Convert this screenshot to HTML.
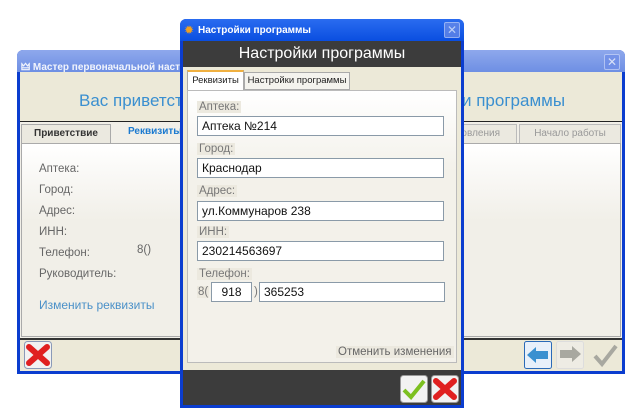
<!DOCTYPE html>
<html><head><meta charset="utf-8"><style>
*{box-sizing:border-box;margin:0;padding:0}
body{width:643px;height:418px;background:#fff;position:relative;overflow:hidden;font-family:"Liberation Sans",sans-serif;font-size:11px;color:#555}
.a{position:absolute}
.inp{position:absolute;background:#fff;border:1px solid #8a9aa8;font-size:12px;color:#111;padding:2px 4px;line-height:14px}
.lbl{position:absolute;font-size:11.5px;color:#777;background:#ece9df;padding:0 2px}
.xbtn{position:absolute;background:#6f8ee8;border:1px solid #c8d4f8;border-radius:2px;opacity:.7}
</style></head><body>
<!-- back window -->
<div class="a" style="left:17px;top:50px;width:608px;height:324px;background:#0b3dcf;border-radius:6px 6px 0 0"></div>
<div class="a" style="left:17px;top:50px;width:608px;height:22px;background:linear-gradient(#8ea8ec,#6e8fe4);border-radius:6px 6px 0 0"></div>
<div class="a" style="left:21px;top:55px;color:#fff;font-size:10px;font-weight:bold;opacity:.9">🜲 Мастер первоначальной настр</div>
<div class="xbtn" style="left:604px;top:54px;width:16px;height:16px;color:#fff;font-size:12px;text-align:center;line-height:14px">✕</div>
<div class="a" style="left:20px;top:72px;width:602px;height:299px;background:#f1efe8"></div>
<div class="a" style="left:20px;top:72px;width:602px;height:50px;background:#ece9d8;border-bottom:1px solid #222"></div>
<div class="a" style="left:79px;top:91px;font-size:17px;color:#3a8fd0">Вас приветств</div>
<div class="a" style="left:462px;top:91px;font-size:17px;color:#3a8fd0">и программы</div>
<div class="a" style="left:21px;top:124px;width:90px;height:20px;background:#ebe9e0;border:1px solid #aaa;font-size:10px;font-weight:bold;color:#333;text-align:center;line-height:18px">Приветствие</div>
<div class="a" style="left:128px;top:126px;font-size:10px;font-weight:bold;color:#1c7ad0">Реквизиты</div>
<div class="a" style="left:447px;top:124px;width:70px;height:20px;background:#ebe9e0;border:1px solid #bbb;font-size:10px;color:#999;text-align:right;padding-right:16px;line-height:18px">овления</div>
<div class="a" style="left:519px;top:124px;width:102px;height:20px;background:#ebe9e0;border:1px solid #bbb;font-size:10px;color:#999;text-align:center;line-height:18px">Начало работы</div>
<div class="a" style="left:21px;top:143px;width:600px;height:194px;background:linear-gradient(#fff,#f1efe8 40%);border:1px solid #aaa"></div>
<div class="a" style="left:39px;top:159px;font-size:11.5px;color:#666;line-height:21px">Аптека:<br>Город:<br>Адрес:<br>ИНН:<br>Телефон:<br>Руководитель:</div>
<div class="a" style="left:137px;top:244px;font-size:11.5px;color:#666">8()</div>
<div class="a" style="left:39px;top:298px;font-size:12px;color:#4a90c8">Изменить реквизиты</div>
<div class="a" style="left:20px;top:338px;width:602px;height:33px;background:#ece9d8;border-top:2px solid #333"></div>
<svg class="a" style="left:24px;top:341px" width="28" height="28"><rect x=".5" y=".5" width="27" height="27" rx="3" fill="#f2f2f2" stroke="#8a9ab8"/><path d="M5 6L23 22M23 6L5 22" stroke="#e02020" stroke-width="6" stroke-linecap="round"/></svg>
<svg class="a" style="left:524px;top:341px" width="28" height="28"><rect x=".5" y=".5" width="27" height="27" rx="2" fill="#e8f0fa" stroke="#2a6ab8"/><path d="M3 14L12 6V10H24V18H12V22Z" fill="#3a90d0"/></svg>
<svg class="a" style="left:556px;top:341px" width="28" height="28"><rect x=".5" y=".5" width="27" height="27" rx="2" fill="#eeece4" stroke="#ddd"/><path d="M25 13L16 5V9H4V17H16V21Z" fill="#a8a8a0"/></svg>
<svg class="a" style="left:592px;top:341px" width="26" height="28"><path d="M3 15L10 23L24 5" stroke="#a8a8a0" stroke-width="4" fill="none"/></svg>

<!-- front window -->
<div class="a" style="left:180px;top:19px;width:284px;height:389px;background:#0b3dcf;border-radius:6px 6px 0 0"></div>
<div class="a" style="left:180px;top:19px;width:284px;height:22px;background:linear-gradient(#2a6cf0,#0a4ee0);border-radius:6px 6px 0 0"></div>
<div class="a" style="left:184px;top:23px;color:#f0a020;font-size:12px">✹</div>
<div class="a" style="left:198px;top:25px;color:#fff;font-size:10px;font-weight:bold">Настройки программы</div>
<div class="xbtn" style="left:444px;top:22px;width:16px;height:16px;color:#fff;font-size:12px;text-align:center;line-height:14px">✕</div>
<div class="a" style="left:183px;top:41px;width:278px;height:364px;background:#ece9d8"></div>
<div class="a" style="left:183px;top:41px;width:278px;height:26px;background:#3c3c3c;color:#fff;font-size:16px;text-align:center;line-height:26px">Настройки программы</div>
<div class="a" style="left:187px;top:70px;width:57px;height:21px;background:#fff;border:1px solid #aaa;border-top:2px solid #f0b040;border-bottom:none;font-size:9.5px;color:#222;text-align:center;line-height:17px">Реквизиты</div>
<div class="a" style="left:244px;top:72px;width:106px;height:18px;background:#f4f3ee;border:1px solid #aaa;font-size:9.5px;color:#222;text-align:center;line-height:16px">Настройки программы</div>
<div class="a" style="left:187px;top:90px;width:270px;height:273px;background:linear-gradient(#fff,#f3f1ea 30%);border:1px solid #bbb"></div>
<div class="lbl" style="left:197px;top:101px">Аптека:</div>
<div class="inp" style="left:197px;top:116px;width:247px;height:20px">Аптека №214</div>
<div class="lbl" style="left:197px;top:143px">Город:</div>
<div class="inp" style="left:197px;top:158px;width:247px;height:20px">Краснодар</div>
<div class="lbl" style="left:197px;top:185px">Адрес:</div>
<div class="inp" style="left:197px;top:201px;width:247px;height:20px">ул.Коммунаров 238</div>
<div class="lbl" style="left:197px;top:226px">ИНН:</div>
<div class="inp" style="left:197px;top:241px;width:247px;height:20px">230214563697</div>
<div class="lbl" style="left:197px;top:268px">Телефон:</div>
<div class="lbl" style="left:197px;top:286px;padding:0 1px">8(</div>
<div class="inp" style="left:211px;top:282px;width:41px;height:20px;text-align:center">918</div>
<div class="a" style="left:254px;top:286px;font-size:11.5px;color:#777">)</div>
<div class="inp" style="left:259px;top:282px;width:186px;height:20px">365253</div>
<div class="lbl" style="left:336px;top:346px;font-size:11.5px;color:#666">Отменить изменения</div>
<div class="a" style="left:183px;top:370px;width:278px;height:35px;background:#3c3c3c"></div>
<svg class="a" style="left:400px;top:375px" width="28" height="28"><rect x=".5" y=".5" width="27" height="27" rx="3" fill="#f2f2f2" stroke="#999"/><path d="M4 15L11 22L24 6" stroke="#7cc020" stroke-width="4" fill="none"/></svg>
<svg class="a" style="left:431px;top:375px" width="28" height="28"><rect x=".5" y=".5" width="27" height="27" rx="3" fill="#f2f2f2" stroke="#999"/><path d="M5 6L23 22M23 6L5 22" stroke="#e02020" stroke-width="6" stroke-linecap="round"/></svg>
</body></html>
